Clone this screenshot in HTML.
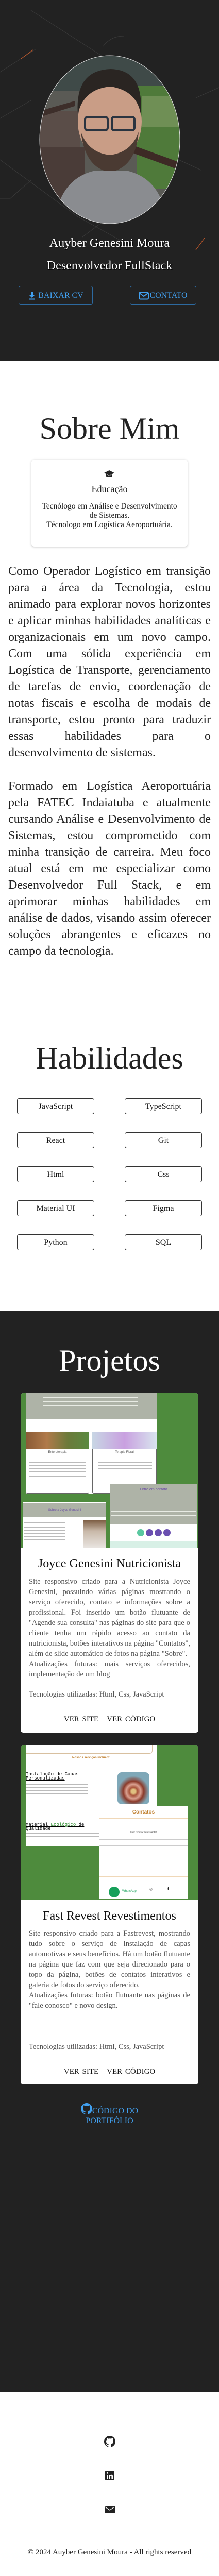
<!DOCTYPE html>
<html><head><meta charset="utf-8">
<style>
*{box-sizing:border-box;margin:0;padding:0}
html,body{width:425px;height:5033px;background:#fff;overflow:hidden}
body{position:relative;font-family:"Liberation Serif","Times New Roman",serif;color:#222}
.a{position:absolute}
.c{text-align:center;left:0;width:425px}
.dark{background:#222}
.btn{position:absolute;border:1px solid #2d6aa0;border-radius:4px;color:#41a0f0;font-size:16px;display:flex;align-items:center;justify-content:center;gap:4px}
.sk{position:absolute;width:150px;height:31px;border:1px solid #333;border-radius:4px;font-size:16px;display:flex;align-items:center;justify-content:center;color:#111}
.p{position:absolute;left:16px;width:393px;font-size:24px;line-height:32px;text-align:justify;color:#222}
.card{position:absolute;left:40px;width:345px;background:#fff;border-radius:5px;overflow:hidden}
.img{position:absolute;left:0;top:0;width:345px;height:300px;background:#4e8b3d}
.ct{position:absolute;left:0;width:345px;text-align:center;font-size:24px;color:#111}
.cd{position:absolute;left:16px;width:313px;font-size:14.5px;line-height:20px;text-align:justify;color:#555}
.cb{position:absolute;left:0;width:345px;text-align:center;font-size:15px;color:#111;word-spacing:2px}
.cb span{margin:0 8px}
.tiny{background:repeating-linear-gradient(#bbb 0 1px,transparent 1px 3px)}
</style></head><body>

<!-- HEADER -->
<div class="a dark" style="left:0;top:0;width:425px;height:700px"></div>
<svg class="a" style="left:0;top:0" width="425" height="700">
<g stroke="#3a3a3a" stroke-width="1" fill="none">
<path d="M60 20 L200 110"/><path d="M0 140 L70 95"/><path d="M0 230 L60 195"/><path d="M0 310 L150 420 L240 470"/>
<path d="M200 90 Q215 70 240 70"/><path d="M325 300 L390 330"/><path d="M330 300 Q330 330 310 340"/>
<path d="M0 385 Q10 385 20 385 L60 350"/><path d="M160 460 L200 430"/><path d="M380 190 L425 170"/>
</g>
<path d="M41 114 L64 97" stroke="#c0582a" stroke-width="1.2"/>
<path d="M380 485 L397 462" stroke="#c0582a" stroke-width="1.2"/>
</svg>
<svg class="a" style="left:75px;top:106px" width="276" height="330" viewBox="0 0 276 330">
<defs><clipPath id="cp"><ellipse cx="138" cy="165" rx="136" ry="163"/></clipPath></defs>
<g clip-path="url(#cp)">
<rect width="276" height="330" fill="#5a5a55"/>
<rect y="0" width="276" height="70" fill="#3f4a48"/>
<rect x="190" y="60" width="86" height="200" fill="#4f7a3a"/>
<rect x="200" y="80" width="76" height="60" fill="#6f8f55"/>
<rect x="0" y="110" width="80" height="120" fill="#5a4d48"/>
<rect x="0" y="180" width="90" height="100" fill="#4a3c38"/>
<path d="M180 175 L276 210 L276 225 L180 190Z" fill="#3d2a25"/>
<path d="M0 110 L70 90 L70 100 L0 122Z" fill="#3d2e2a"/>
<ellipse cx="138" cy="130" rx="62" ry="78" fill="#c99d86"/>
<path d="M76 115 Q70 30 140 28 Q205 30 198 115 Q190 70 140 62 Q88 66 76 115Z" fill="#2a2522"/>
<path d="M82 150 Q90 220 138 228 Q188 220 194 150 Q180 190 138 195 Q96 190 82 150Z" fill="#4a3a32"/>
<rect x="90" y="121" width="44" height="26" rx="5" fill="none" stroke="#2a3440" stroke-width="4"/>
<rect x="142" y="121" width="44" height="26" rx="5" fill="none" stroke="#2a3440" stroke-width="4"/>
<path d="M30 330 Q40 240 110 225 L170 225 Q240 240 250 330Z" fill="#8a8c90"/>
</g>
<ellipse cx="138" cy="165" rx="136" ry="163" fill="none" stroke="#ddd" stroke-width="1"/>
</svg>
<div class="a c" style="top:459px;font-size:24px;color:#fff;text-shadow:1px 1px 1px #000">Auyber Genesini Moura</div>
<div class="a c" style="top:503px;font-size:24px;color:#fff;text-shadow:1px 1px 1px #000">Desenvolvedor FullStack</div>
<div class="btn" style="left:36px;top:555px;width:144px;height:37px">
<svg width="16" height="16" viewBox="0 0 16 16"><path d="M6 1h4v6h3l-5 5-5-5h3z" fill="#41a0f0"/><rect x="2" y="13.5" width="12" height="2" fill="#41a0f0"/></svg>BAIXAR CV</div>
<div class="btn" style="left:252px;top:555px;width:129px;height:37px;gap:1px">
<svg width="20" height="16" viewBox="0 0 20 16"><rect x="1" y="1.5" width="18" height="13" rx="2" fill="none" stroke="#41a0f0" stroke-width="2"/><path d="M2 3l8 6 8-6" fill="none" stroke="#41a0f0" stroke-width="2"/></svg>CONTATO</div>

<!-- SOBRE MIM -->
<div class="a c" style="top:796px;font-size:60px;line-height:72px;color:#222">Sobre Mim</div>
<div class="a" style="left:61px;top:892px;width:303px;height:169px;border-radius:6px;box-shadow:0 1px 4px rgba(0,0,0,.25);background:#fff;text-align:center">
<svg style="position:absolute;left:140px;top:20px" width="22" height="16" viewBox="0 0 22 16"><path d="M11 1L1 6l10 5 10-5z" fill="#222"/><path d="M5 8.5v4c2 2 10 2 12 0v-4l-6 3z" fill="#222"/></svg>
<div style="position:absolute;top:47px;width:303px;font-size:18px;color:#222">Educação</div>
<div style="position:absolute;top:82px;width:303px;font-size:15.5px;line-height:18px;color:#222">Tecnólogo em Análise e Desenvolvimento<br>de Sistemas.<br>Técnologo em Logística Aeroportuária.</div>
</div>
<div class="p" style="top:1093px">Como Operador Logístico em transição para a área da Tecnologia, estou animado para explorar novos horizontes e aplicar minhas habilidades analíticas e organizacionais em um novo campo. Com uma sólida experiência em Logística de Transporte, gerenciamento de tarefas de envio, coordenação de notas fiscais e escolha de modais de transporte, estou pronto para traduzir essas habilidades para o desenvolvimento de sistemas.</div>
<div class="p" style="top:1510px">Formado em Logística Aeroportuária pela FATEC Indaiatuba e atualmente cursando Análise e Desenvolvimento de Sistemas, estou comprometido com minha transição de carreira. Meu foco atual está em me especializar como Desenvolvedor Full Stack, e em aprimorar minhas habilidades em análise de dados, visando assim oferecer soluções abrangentes e eficazes no campo da tecnologia.</div>

<!-- HABILIDADES -->
<div class="a c" style="top:2018px;font-size:60px;line-height:72px;color:#222">Habilidades</div>
<div class="sk" style="left:33px;top:2132px">JavaScript</div><div class="sk" style="left:242px;top:2132px">TypeScript</div>
<div class="sk" style="left:33px;top:2198px">React</div><div class="sk" style="left:242px;top:2198px">Git</div>
<div class="sk" style="left:33px;top:2264px">Html</div><div class="sk" style="left:242px;top:2264px">Css</div>
<div class="sk" style="left:33px;top:2330px">Material UI</div><div class="sk" style="left:242px;top:2330px">Figma</div>
<div class="sk" style="left:33px;top:2396px">Python</div><div class="sk" style="left:242px;top:2396px">SQL</div>

<!-- PROJETOS -->
<div class="a dark" style="left:0;top:2544px;width:425px;height:2099px"></div>
<div class="a c" style="top:2605px;font-size:60px;line-height:72px;color:#fff">Projetos</div>

<div class="card" style="top:2704px;height:659px">
<div class="img">
 <div class="a" style="left:10px;top:0;width:254px;height:195px;background:#fff"></div>
 <div class="a" style="left:10px;top:0;width:254px;height:51px;background:#aeb3a7"></div>
 <div class="a" style="left:43px;top:4px;width:185px;height:38px;background:repeating-linear-gradient(transparent 0 4px,#e8ebe4 4px 5px,transparent 5px 8px)"></div>
 <div class="a" style="left:10px;top:76px;width:123px;height:119px;border:1px solid #666;border-radius:3px;background:#fff"></div>
 <div class="a" style="left:10px;top:76px;width:123px;height:33px;background:linear-gradient(90deg,#8a5a35,#b07a4a,#6b7a3a,#5a8a40)"></div>
 <div class="a" style="left:10px;top:112px;width:123px;text-align:center;font:6px 'Liberation Sans';color:#555">Enteroterapia</div>
 <div class="a tiny" style="left:16px;top:134px;width:110px;height:28px"></div>
 <div class="a" style="left:139px;top:76px;width:125px;height:119px;border:1px solid #666;border-radius:3px;background:#fff"></div>
 <div class="a" style="left:139px;top:76px;width:125px;height:33px;background:linear-gradient(90deg,#c8d6e4,#c9a0e0,#d8e4ee)"></div>
 <div class="a" style="left:139px;top:112px;width:125px;text-align:center;font:6px 'Liberation Sans';color:#555">Terapia Floral</div>
 <div class="a tiny" style="left:150px;top:134px;width:105px;height:18px"></div>
 <div class="a" style="left:5px;top:211px;width:161px;height:89px;background:#fff"></div>
 <div class="a" style="left:5px;top:214px;width:161px;height:26px;background:#aeb3a7;text-align:center;font:6px/26px 'Liberation Sans';color:#6a4fa3">Sobre a Joyce Genesini</div>
 <div class="a tiny" style="left:6px;top:248px;width:80px;height:40px"></div>
 <div class="a" style="left:121px;top:246px;width:45px;height:54px;background:linear-gradient(#7a5a40,#c8b8a8 40%,#e8e4e0)"></div>
 <div class="a" style="left:173px;top:176px;width:170px;height:124px;background:#fff"></div>
 <div class="a" style="left:173px;top:176px;width:170px;height:78px;background:#aeb3a7"></div>
 <div class="a" style="left:173px;top:184px;width:170px;text-align:center;font:7px 'Liberation Sans';color:#6a4fa3">Entre em contato</div>
 <div class="a" style="left:175px;top:200px;width:166px;height:40px;background:repeating-linear-gradient(transparent 0 5px,#e8ebe4 5px 6px,transparent 6px 8px)"></div>
 <div class="a" style="left:226px;top:264px;width:14px;height:14px;border-radius:50%;background:#5ac8a0"></div>
 <div class="a" style="left:243px;top:264px;width:14px;height:14px;border-radius:50%;background:#6a4fb0"></div>
 <div class="a" style="left:260px;top:264px;width:14px;height:14px;border-radius:50%;background:#6a4fb0"></div>
 <div class="a" style="left:277px;top:264px;width:14px;height:14px;border-radius:50%;background:#6a4fb0"></div>
 <div class="a" style="left:173px;top:287px;width:170px;height:13px;background:#d8f0e6"></div>
</div>
<div class="ct" style="top:318px">Joyce Genesini Nutricionista</div>
<div class="cd" style="top:356px">Site responsivo criado para a Nutricionista Joyce Genesini, possuindo várias páginas mostrando o serviço oferecido, contato e informações sobre a profissional. Foi inserido um botão flutuante de "Agende sua consulta" nas páginas do site para que o cliente tenha um rápido acesso ao contato da nutricionista, botões interativos na página "Contatos", além de slide automático de fotos na página "Sobre".<br>Atualizações futuras: mais serviços oferecidos, implementação de um blog</div>
<div class="cd" style="top:575px">Tecnologias utilizadas: Html, Css, JavaScript</div>
<div class="cb" style="top:625px"><span>VER SITE</span><span>VER CÓDIGO</span></div>
</div>

<div class="card" style="top:3388px;height:658px">
<div class="img">
 <div class="a" style="left:10px;top:0;width:254px;height:195px;background:#fff"></div>
 <div class="a" style="left:10px;top:0;width:246px;height:16px;border:1px solid #d8c0a0;border-top:none;border-left:none;border-radius:0 0 6px 0"></div>
 <div class="a" style="left:10px;top:21px;width:254px;text-align:center;font:bold 6px 'Liberation Sans';color:#c08030">Nossos serviços incluem:</div>
 <div class="a" style="left:10px;top:52px;width:130px;font:9px/8px 'Liberation Mono';color:#000;text-decoration:underline">Instalação de Capas Personalizadas</div>
 <div class="a tiny" style="left:10px;top:72px;width:120px;height:26px"></div>
 <div class="a" style="left:188px;top:52px;width:62px;height:62px;border-radius:8px;background:radial-gradient(circle at 50% 60%,#e0c080 4px,#a8533a 8px,#d9a090 14px,#8b3a2a 20px,#7fa8b8 30px)"></div>
 <div class="a" style="left:10px;top:134px;width:140px;height:1px;background:#b08060"></div>
 <div class="a" style="left:10px;top:150px;width:140px;font:9px/8px 'Liberation Mono';color:#000;text-decoration:underline">Material <span style="color:#2a8a2a">Ecológico</span> de Qualidade</div>
 <div class="a tiny" style="left:10px;top:170px;width:143px;height:10px"></div>
 <div class="a" style="left:153px;top:118px;width:171px;height:179px;background:#fff"></div>
 <div class="a" style="left:153px;top:124px;width:171px;text-align:center;font:bold 10px 'Liberation Sans';color:#c08030">Contatos</div>
 <div class="a" style="left:153px;top:141px;width:171px;height:1px;background:#f0d8b8"></div>
 <div class="a" style="left:153px;top:165px;width:171px;text-align:center;font:4.5px 'Liberation Sans';color:#333">Quer renovar seu volante?</div>
 <div class="a" style="left:153px;top:182px;width:171px;height:1px;background:#ccc"></div>
 <div class="a" style="left:153px;top:194px;width:171px;height:1px;background:#ccc"></div>
 <div class="a" style="left:153px;top:254px;width:171px;height:1px;background:#f0d8b8"></div>
 <div class="a" style="left:171px;top:274px;width:21px;height:21px;border-radius:50%;background:#17a05a"></div>
 <div class="a" style="left:197px;top:280px;font:6px 'Liberation Sans';color:#17a05a">WhatsApp</div>
 <div class="a" style="left:250px;top:275px;font:7px 'Liberation Sans';color:#555">◎</div>
 <div class="a" style="left:285px;top:274px;font:bold 8px 'Liberation Sans';color:#000">f</div>
</div>
<div class="ct" style="top:318px">Fast Revest Revestimentos</div>
<div class="cd" style="top:355px">Site responsivo criado para a Fastrevest, mostrando tudo sobre o serviço de instalação de capas automotivas e seus benefícios. Há um botão flutuante na página que faz com que seja direcionado para o topo da página, botões de contatos interativos e galeria de fotos do serviço oferecido.<br>Atualizações futuras: botão flutuante nas páginas de "fale conosco" e novo design.</div>
<div class="cd" style="top:575px">Tecnologias utilizadas: Html, Css, JavaScript</div>
<div class="cb" style="top:625px"><span>VER SITE</span><span>VER CÓDIGO</span></div>
</div>

<div class="a c" style="top:4082px;font-size:16px;line-height:19px;color:#41a0f0">
<svg width="22" height="22" viewBox="0 0 16 16" style="vertical-align:-2px"><path fill="#41a0f0" d="M8 0C3.58 0 0 3.58 0 8c0 3.54 2.29 6.53 5.47 7.59.4.07.55-.17.55-.38 0-.19-.01-.82-.01-1.49-2.01.37-2.53-.49-2.69-.94-.09-.23-.48-.94-.82-1.13-.28-.15-.68-.52-.01-.53.63-.01 1.08.58 1.23.82.72 1.21 1.87.87 2.33.66.07-.52.28-.87.51-1.07-1.78-.2-3.64-.89-3.64-3.95 0-.87.31-1.59.82-2.15-.08-.2-.36-1.02.08-2.12 0 0 .67-.21 2.2.82.64-.18 1.32-.27 2-.27s1.36.09 2 .27c1.53-1.04 2.2-.82 2.2-.82.44 1.1.16 1.92.08 2.12.51.56.82 1.27.82 2.15 0 3.07-1.87 3.75-3.65 3.95.29.25.54.73.54 1.48 0 1.07-.01 1.93-.01 2.2 0 .21.15.46.55.38A8.01 8.01 0 0016 8c0-4.42-3.58-8-8-8z"/></svg>CÓDIGO DO<br>PORTIFÓLIO</div>

<!-- FOOTER -->
<svg class="a" style="left:202px;top:4728px" width="22" height="22" viewBox="0 0 16 16"><path fill="#222" d="M8 0C3.58 0 0 3.58 0 8c0 3.54 2.29 6.53 5.47 7.59.4.07.55-.17.55-.38 0-.19-.01-.82-.01-1.49-2.01.37-2.53-.49-2.69-.94-.09-.23-.48-.94-.82-1.13-.28-.15-.68-.52-.01-.53.63-.01 1.08.58 1.23.82.72 1.21 1.87.87 2.33.66.07-.52.28-.87.51-1.07-1.78-.2-3.64-.89-3.64-3.95 0-.87.31-1.59.82-2.15-.08-.2-.36-1.02.08-2.12 0 0 .67-.21 2.2.82.64-.18 1.32-.27 2-.27s1.36.09 2 .27c1.53-1.04 2.2-.82 2.2-.82.44 1.1.16 1.92.08 2.12.51.56.82 1.27.82 2.15 0 3.07-1.87 3.75-3.65 3.95.29.25.54.73.54 1.48 0 1.07-.01 1.93-.01 2.2 0 .21.15.46.55.38A8.01 8.01 0 0016 8c0-4.42-3.58-8-8-8z"/></svg>
<svg class="a" style="left:204px;top:4796px" width="18" height="18" viewBox="0 0 18 18"><rect width="18" height="18" rx="2" fill="#222"/><rect x="3" y="7" width="2.6" height="8" fill="#fff"/><circle cx="4.3" cy="4.3" r="1.5" fill="#fff"/><path d="M7.5 7h2.4v1.2c.6-1 1.6-1.4 2.6-1.4 2 0 2.5 1.3 2.5 3V15h-2.6v-4.6c0-.9-.2-1.6-1.1-1.6-1 0-1.3.7-1.3 1.7V15H7.5z" fill="#fff"/></svg>
<svg class="a" style="left:203px;top:4864px" width="20" height="14" viewBox="0 0 20 14"><rect width="20" height="14" rx="1.5" fill="#222"/><path d="M1 2l9 6 9-6" fill="none" stroke="#fff" stroke-width="1.3"/></svg>
<div class="a c" style="top:4946px;font-size:15px;color:#222">© 2024 Auyber Genesini Moura - All rights reserved</div>
</body></html>
